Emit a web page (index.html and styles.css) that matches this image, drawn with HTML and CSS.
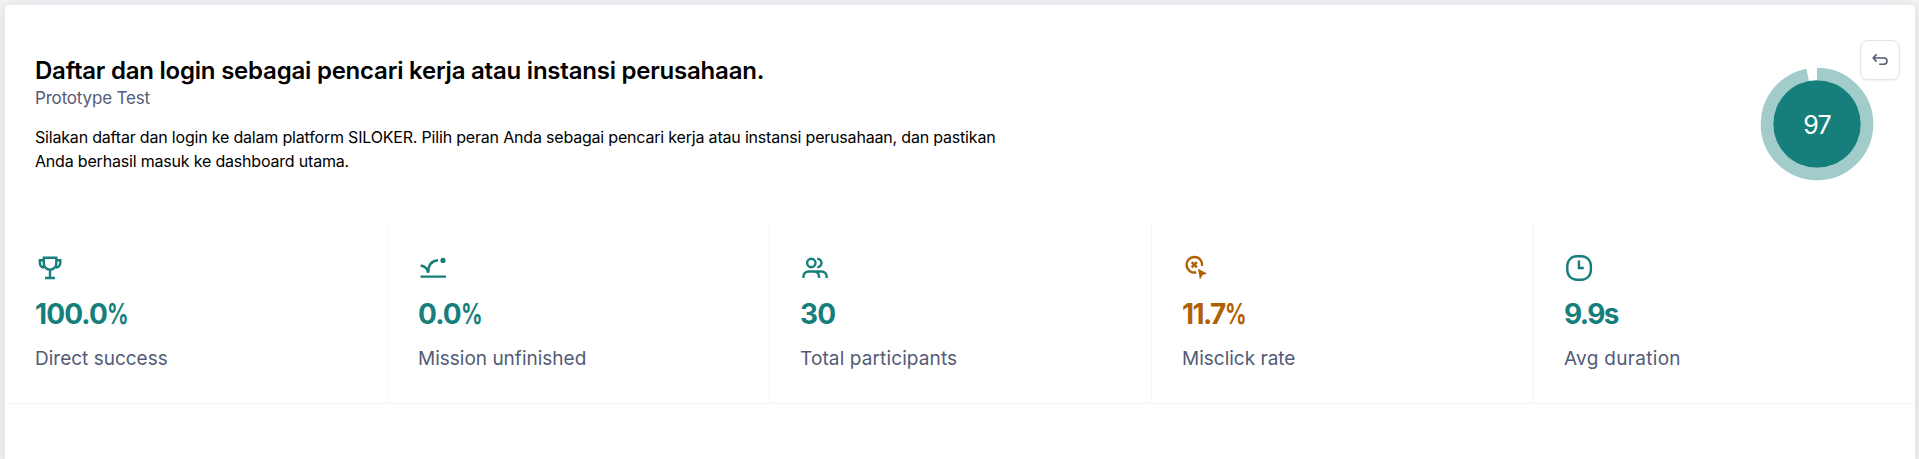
FILE: index.html
```html
<!DOCTYPE html>
<html lang="id">
<head>
<meta charset="utf-8">
<title>Prototype Test</title>
<link rel="stylesheet" href="styles.css">
</head>
<body>
<main class="card">
  <header class="head">
    <div class="intro">
      <h1 class="title">Daftar dan login sebagai pencari kerja atau instansi perusahaan.</h1>
      <p class="kind">Prototype Test</p>
      <p class="desc">Silakan daftar dan login ke dalam platform SILOKER. Pilih peran Anda sebagai pencari kerja atau instansi perusahaan, dan pastikan<br>Anda berhasil masuk ke dashboard utama.</p>
    </div>
    <div class="score">
      <svg class="ring" viewBox="0 0 114 114"><circle cx="57" cy="57" r="50" fill="none" stroke="#a2ccc9" stroke-width="12.6" pathLength="100" stroke-dasharray="97 3" transform="rotate(-90 57 57)"/><circle cx="57" cy="57" r="43.8" fill="#167f7b"/></svg>
      <span class="score-num">97</span>
    </div>
    <button class="undo" aria-label="Undo"><svg width="16" height="16" viewBox="0 0 16 16" fill="none" stroke="#535b76" stroke-width="1.6"><path d="M4.6 2.4 1.2 6l3.4 3.600M1.2 6h10.700a3.100 3.100 0 0 1 0 6.200H7.200"/></svg></button>
  </header>
  <section class="stats">
    <article class="stat">
      <svg class="icon" viewBox="0 0 32 32"><path d="M8.800 5.800h12.500v5.600a6.250 6.250 0 0 1-12.500 0zM8.800 8.200h-4v2.200c0 2.800 1.600 4.700 4.400 5.300M21.300 8.200h4v2.200c0 2.800-1.600 4.700-4.400 5.300M15 17.500v8M10 26h10"/></svg>
      <strong class="value">100.0<span class="pct">%</span></strong><span class="label">Direct success</span>
    </article>
    <article class="stat">
      <svg class="icon" viewBox="0 0 32 32"><path d="M2.500 24.600H28M2.700 13.500c3.900.600 6.800 3 7.500 7.300 0-7.500 3.500-12 9.800-12.500"/><circle cx="25" cy="8.400" r="2.600" fill="currentColor" stroke="none"/></svg>
      <strong class="value">0.0<span class="pct">%</span></strong><span class="label">Mission unfinished</span>
    </article>
    <article class="stat">
      <svg class="icon" viewBox="0 0 32 32"><circle cx="11.300" cy="11" r="4.200"/><path d="M17.300 6.800a4.200 4.200 0 0 1 0 8.400M3.500 26v-1.500a5 5 0 0 1 5-5h5.500a5 5 0 0 1 5 5V26M15 19.500h6.600a5 5 0 0 1 5 5V26"/></svg>
      <strong class="value">30</strong><span class="label looser">Total participants</span>
    </article>
    <article class="stat warn">
      <svg class="icon" viewBox="0 0 32 32"><path d="M14.300 20.300a7.800 7.800 0 1 1 5.800-6.400"/><path d="m9.700 10.100 5.200 5.200m0-5.200-5.200 5.200" stroke-width="2.500"/><path d="m16 16.800 9 4.600-4.400 1.500-2.700 4.500z" fill="currentColor" stroke="none"/></svg>
      <strong class="value tight">11.7<span class="pct">%</span></strong><span class="label">Misclick rate</span>
    </article>
    <article class="stat">
      <svg class="icon" viewBox="0 0 32 32"><rect x="3.300" y="4.200" width="23.600" height="23.600" rx="9.500"/><path d="M14.900 8.500v7.500h4.900"/></svg>
      <strong class="value tight">9.9s</strong><span class="label loosest">Avg duration</span>
    </article>
  </section>
</main>
</body>
</html>
```
FILE: styles.css
```css
* { box-sizing: border-box; }
body {
  margin: 0;
  padding: 5px 4px 0 5px;
  height: 459px;
  background: #f3f3f5;
  font-family: Inter, "Liberation Sans", sans-serif;
}
h1, p { margin: 0; }
.card {
  height: 454px;
  background: #fff;
  border-radius: 5px 5px 0 0;
  box-shadow: 0 4px 24px rgba(50, 50, 93, 0.14);
}
.head {
  position: relative;
  display: flex;
  justify-content: space-between;
  height: 218px;
  padding: 50px 41px 0 30px;
}
.title {
  font-size: 24px;
  font-weight: 600;
  line-height: 32px;
  letter-spacing: -0.22px;
  white-space: nowrap;
}
.kind {
  margin-top: -1px;
  font-size: 17px;
  line-height: 24px;
  color: #535b76;
  letter-spacing: -0.18px;
}
.desc {
  margin-top: 15px;
  font-size: 16px;
  line-height: 24px;
  letter-spacing: -0.19px;
  white-space: nowrap;
}
.score {
  display: grid;
  place-items: center;
  width: 114px;
  height: 114px;
  margin-top: 12px;
}
.ring, .score-num { grid-area: 1 / 1; }
.ring { width: 114px; height: 114px; }
.score-num { z-index: 1; color: #fff; font-size: 25px; line-height: 30px; padding-top: 2px; letter-spacing: -0.8px; }
.undo {
  position: absolute;
  top: 35px;
  right: 15px;
  display: grid;
  place-items: center;
  width: 40px;
  height: 40px;
  padding: 0;
  background: #fff;
  border: 1px solid #e4e4eb;
  border-radius: 8px;
  box-shadow: 0 1px 2px rgba(50, 50, 93, 0.08);
}
.stats {
  display: grid;
  grid-template-columns: repeat(5, 382px);
  height: 181px;
  border-bottom: 1px solid #f5f5f7;
}
.stat {
  display: flex;
  flex-direction: column;
  align-items: flex-start;
  padding: 29px 0 0 30px;
  color: #167f7b;
}
.stat + .stat { border-left: 1px solid #f5f5f7; }
.stat.warn { color: #b06000; }
.icon {
  width: 32px;
  height: 32px;
  fill: none;
  stroke: currentColor;
  stroke-width: 2.4;
}
.value {
  margin-top: 13px;
  font-size: 28px;
  font-weight: 700;
  line-height: 34px;
  letter-spacing: -0.9px;
  white-space: nowrap;
}
.value.tight { letter-spacing: -1.6px; }
.pct {
  display: inline-block;
  transform: scaleX(0.76);
  transform-origin: left;
}
.label {
  margin-top: 14px;
  font-size: 19px;
  line-height: 28px;
  color: #535b76;
  white-space: nowrap;
}
.label.looser { letter-spacing: 0.12px; }
.label.loosest { letter-spacing: 0.3px; }
```
